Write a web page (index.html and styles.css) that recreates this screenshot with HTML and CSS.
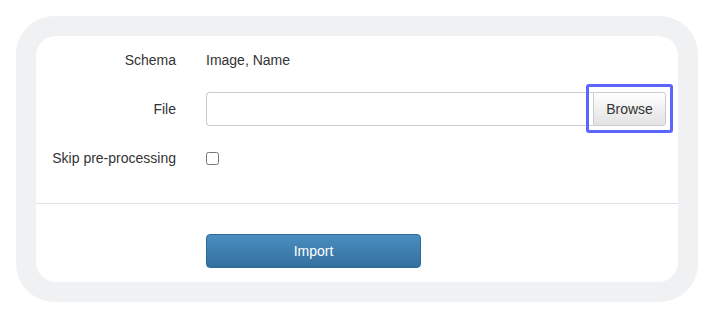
FILE: index.html
```html
<!DOCTYPE html>
<html lang="en">
<head>
  <meta charset="UTF-8" />
  <title>Import</title>
  <link rel="stylesheet" href="styles.css">
</head>
<body>
  <div class="frame">
    <div class="card">
      <form class="card-body">
        <div class="form-row">
          <label class="form-label">Schema</label>
          <div class="form-value">Image, Name</div>
        </div>

        <div class="form-row">
          <label class="form-label" for="file">File</label>
          <div class="input-group">
            <input type="text" id="file" class="file-input" />
            <button type="button" class="browse-btn">Browse</button>
          </div>
        </div>

        <div class="form-row">
          <label class="form-label" for="skip">Skip pre-processing</label>
          <div class="form-value">
            <input type="checkbox" id="skip" class="checkbox" />
          </div>
        </div>
      </form>

      <div class="card-footer">
        <button type="button" class="import-btn">Import</button>
      </div>
    </div>
  </div>
</body>
</html>
```

FILE: styles.css
```css
body {
  font-family: "Liberation Sans", Arial, sans-serif;
  font-size: 14px;
  color: #333;
  background: #fff;
  margin: 0;
  padding: 16px;
}

.frame {
  width: 642px;
  background: #f0f1f3;
  border-radius: 38px;
  padding: 20px;
}

.card {
  background: #fff;
  border-radius: 20px;
}

.card-body {
  margin: 0;
  padding: 7px 0 28px;
  border-bottom: 1px solid #dfe0e5;
  display: flex;
  flex-direction: column;
  gap: 15px;
}

.form-row {
  display: flex;
  align-items: center;
  min-height: 34px;
}

.form-label {
  width: 140px;
  text-align: right;
  padding-right: 30px;
  flex-shrink: 0;
}

.form-value {
  display: flex;
  align-items: center;
}

.input-group {
  display: flex;
  width: 460px;
  height: 34px;
}

.file-input {
  flex: 1;
  margin: 0;
  border: 1px solid #ccc;
  border-right: none;
  border-radius: 4px 0 0 4px;
  padding: 6px 12px;
  font: inherit;
  box-sizing: border-box;
  height: 34px;
}

.browse-btn {
  position: relative;
  width: 73px;
  margin: 0;
  height: 34px;
  border: 1px solid #ccc;
  border-radius: 0 3px 3px 0;
  background: linear-gradient(#fff, #e2e2e2);
  font: inherit;
  color: #333;
}

/* highlight box drawn around the button */
.browse-btn::after {
  content: "";
  position: absolute;
  left: -8px;
  right: -8px;
  top: -9px;
  bottom: -8px;
  border: 3px solid #5c66ff;
  border-radius: 3px;
}

.checkbox {
  width: 13px;
  height: 13px;
  margin: 0;
}

.card-footer {
  padding: 30px 0 14px 170px;
}

.import-btn {
  width: 215px;
  height: 34px;
  border: 1px solid #2e6a99;
  border-radius: 4px;
  background: linear-gradient(#4a8ebf, #33709f);
  color: #fff;
  font: inherit;
  display: block;
}
```
